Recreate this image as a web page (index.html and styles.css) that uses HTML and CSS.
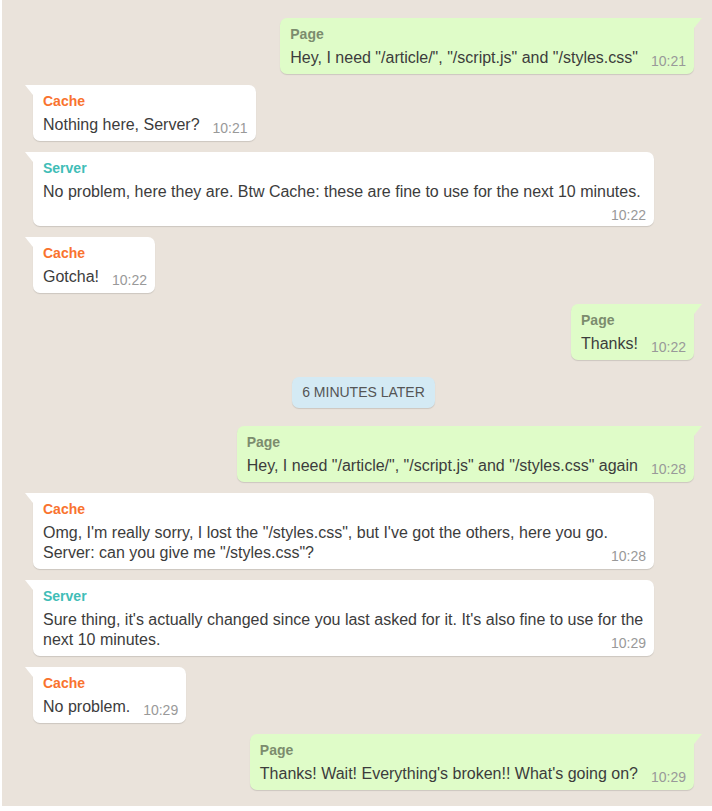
FILE: index.html
```html
<!DOCTYPE html>
<html>
<head>
<meta charset="utf-8">
<link rel="stylesheet" href="styles.css">
</head>
<body>
<div class="chat">
  <div class="msg page"><div class="name">Page</div><div class="text">Hey, I need "/article/", "/script.js" and "/styles.css"<span class="time">10:21</span></div></div>
  <div class="msg cache"><div class="name">Cache</div><div class="text">Nothing here, Server?<span class="time">10:21</span></div></div>
  <div class="msg server"><div class="name">Server</div><div class="text">No problem, here they are. Btw Cache: these are fine to use for the next 10 minutes.<span class="time">10:22</span></div></div>
  <div class="msg cache"><div class="name">Cache</div><div class="text">Gotcha!<span class="time">10:22</span></div></div>
  <div class="msg page"><div class="name">Page</div><div class="text">Thanks!<span class="time">10:22</span></div></div>
  <div class="divider">6 minutes later</div>
  <div class="msg page"><div class="name">Page</div><div class="text">Hey, I need "/article/", "/script.js" and "/styles.css" again<span class="time">10:28</span></div></div>
  <div class="msg cache"><div class="name">Cache</div><div class="text">Omg, I'm really sorry, I lost the "/styles.css", but I've got the others, here you go. Server: can you give me "/styles.css"?<span class="time">10:28</span></div></div>
  <div class="msg server"><div class="name">Server</div><div class="text">Sure thing, it's actually changed since you last asked for it. It's also fine to use for the next 10 minutes.<span class="time">10:29</span></div></div>
  <div class="msg cache"><div class="name">Cache</div><div class="text">No problem.<span class="time">10:29</span></div></div>
  <div class="msg page"><div class="name">Page</div><div class="text">Thanks! Wait! Everything's broken!! What's going on?<span class="time">10:29</span></div></div>
</div>
</body>
</html>
```
FILE: styles.css
```css
html, body {
  margin: 0;
  padding: 0;
  background: #ffffff;
}
body {
  font-family: "Liberation Sans", Arial, sans-serif;
  color: #3c3c3c;
}
.chat {
  margin-left: 2px;
  background: #eae3db;
  padding: 18px 18px 16px 31px;
  display: flex;
  flex-direction: column;
  align-items: flex-start;
  gap: 11px;
}
.msg {
  position: relative;
  max-width: 621px;
  box-sizing: border-box;
  padding: 6px 8px 6px 10px;
  border-radius: 7px;
  background: #ffffff;
  box-shadow: 0 1px 1px rgba(0, 0, 0, 0.13);
}
.msg.page {
  align-self: flex-end;
  background: #dffcc8;
  border-top-right-radius: 0;
}
.msg.cache, .msg.server {
  border-top-left-radius: 0;
}
.msg.page::after {
  content: "";
  position: absolute;
  top: 0;
  right: -8px;
  border-top: 10px solid #dffcc8;
  border-right: 8px solid transparent;
}
.msg.cache::after, .msg.server::after {
  content: "";
  position: absolute;
  top: 0;
  left: -8px;
  border-top: 10px solid #ffffff;
  border-left: 8px solid transparent;
}
.name {
  font-size: 14px;
  font-weight: bold;
  line-height: 20px;
}
.page .name { color: #7c8c6e; }
.cache .name { color: #f9732f; }
.server .name { color: #3fbdb7; }
.text {
  font-size: 16px;
  line-height: 20px;
  margin-top: 4px;
  display: flow-root;
}
.time {
  float: right;
  font-size: 14px;
  line-height: 18px;
  color: #999999;
  margin: 4px 0 -4px 13px;
}
.divider {
  align-self: center;
  margin: 6px 0 7px;
  padding: 5px 10px;
  font-size: 14px;
  line-height: 21px;
  text-transform: uppercase;
  color: #555555;
  background: #d4eaf4;
  border-radius: 7px;
  box-shadow: 0 1px 1px rgba(0, 0, 0, 0.13);
}
```
